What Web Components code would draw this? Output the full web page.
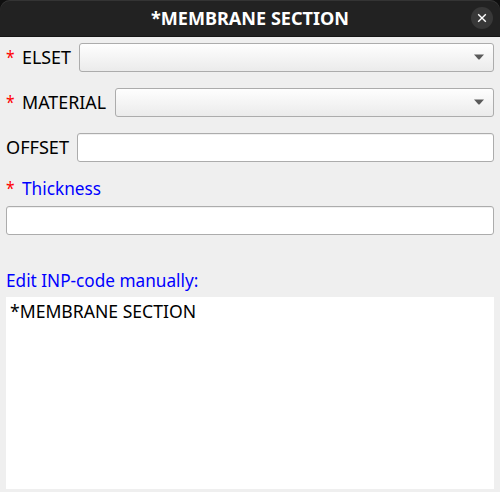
<!DOCTYPE html>
<html lang="en">
<head>
<meta charset="utf-8">
<title>*MEMBRANE SECTION</title>
<style>
html, body { margin: 0; height: 100%; overflow: hidden; background: #efefef; }
body { font: 17.3px/24px "Noto Sans", "Open Sans", sans-serif; color: #000; }
</style>
</head>
<body>
<keyword-dialog></keyword-dialog>
<script>
// Text squeezed horizontally to the advance width given in its "width" attribute.
class FitText extends HTMLElement {
  connectedCallback() {
    const root = this.attachShadow({ mode: 'open' });
    root.innerHTML = `<style>
      :host { display: block; flex: none; height: 24px; white-space: nowrap; }
      span { display: inline-block; transform-origin: 0 50%; }
    </style><span><slot></slot></span>`;
    const width = parseFloat(this.getAttribute('width'));
    this.style.width = width + 'px';
    const span = root.querySelector('span');
    span.style.transform = `scaleX(${width / span.getBoundingClientRect().width})`;
  }
}
customElements.define('fit-text', FitText);

class RequiredMark extends HTMLElement {
  constructor() {
    super();
    this.attachShadow({ mode: 'open' }).innerHTML = `<style>
      :host { display: block; flex: none; width: 16px; color: #ff0000; }
    </style><fit-text width="8.6">*</fit-text>`;
  }
}
customElements.define('required-mark', RequiredMark);

class TitleBar extends HTMLElement {
  constructor() {
    super();
    this.attachShadow({ mode: 'open' }).innerHTML = `<style>
      :host { display: block; height: 37px; flex: none; background: #0f0f0f; }
      .bar { box-sizing: border-box; height: 37px; display: grid; grid-template-columns: 30px 1fr 30px;
        background: #222; border-radius: 10px 10px 0 0; border-bottom: 1px solid #161616;
        box-shadow: inset 0 1px #343434; color: #fff; font-weight: 700; }
      .title { justify-self: center; padding-top: 7px; }
      svg { width: 22px; height: 22px; margin: 7px 0 0 1px; }
    </style>
    <div class="bar"><i></i><div class="title"><slot></slot></div>
      <svg viewBox="0 0 22 22"><circle cx="11" cy="11" r="11" fill="#383838"/>
      <path d="M7.2 7.2l7.6 7.6M14.8 7.2l-7.6 7.6" stroke="#fff" stroke-width="1.4"/></svg>
    </div>`;
  }
}
customElements.define('title-bar', TitleBar);

const FIELD_CSS = `
  :host { display: flex; box-sizing: border-box; height: 29px; flex: 1; min-width: 0;
    border: 1px solid #acacac; border-radius: 3px; background: #fff; }`;

class ComboBox extends HTMLElement {
  constructor() {
    super();
    this.attachShadow({ mode: 'open' }).innerHTML = `<style>${FIELD_CSS}
      :host { justify-content: flex-end; align-items: center; padding-right: 9px;
        background: linear-gradient(#fefefe, #ebebeb); }
      svg { width: 10px; height: 6px; margin-bottom: 1px; }
    </style><svg viewBox="0 0 10 6"><path d="M0 .5h10L5.5 5.5h-1z" fill="#5a5a5a"/></svg>`;
  }
}
customElements.define('combo-box', ComboBox);

class LineEdit extends HTMLElement {
  constructor() {
    super();
    this.attachShadow({ mode: 'open' }).innerHTML = `<style>${FIELD_CSS}
      :host { box-shadow: inset 0 1px #f0f0f0; }</style>`;
  }
}
customElements.define('line-edit', LineEdit);

class FormRow extends HTMLElement {
  constructor() {
    super();
    this.attachShadow({ mode: 'open' }).innerHTML = `<style>
      :host { display: flex; flex: none; height: 29px; align-items: center; }
    </style><slot></slot>`;
  }
}
customElements.define('form-row', FormRow);

class CodeEditor extends HTMLElement {
  constructor() {
    super();
    this.attachShadow({ mode: 'open' }).innerHTML = `<style>
      :host { display: block; flex: 1; box-sizing: border-box; background: #fff; padding: 3px 4px; }
    </style><slot></slot>`;
  }
}
customElements.define('code-editor', CodeEditor);

class KeywordDialog extends HTMLElement {
  constructor() {
    super();
    this.attachShadow({ mode: 'open' }).innerHTML = `<style>
      :host { display: flex; flex-direction: column; height: 492px; }
      main { flex: 1; display: flex; flex-direction: column; padding: 6px 6px 3px; }
      form-row { margin-bottom: 16px; }
      .heading { height: 24px; margin-bottom: 5px; color: #0000ff; }
      .thickness { margin-bottom: 34px; }
      .edit { margin-bottom: 4px; }
      combo-box, line-edit { margin-left: 8px; }
      .thickness line-edit { margin-left: 0; }
    </style>
    <title-bar><fit-text width="198">*MEMBRANE SECTION</fit-text></title-bar>
    <main>
      <form-row><required-mark></required-mark><fit-text width="49">ELSET</fit-text><combo-box></combo-box></form-row>
      <form-row><required-mark></required-mark><fit-text width="84">MATERIAL</fit-text><combo-box style="margin-left:9px"></combo-box></form-row>
      <form-row style="margin-bottom:15px"><fit-text width="63">OFFSET</fit-text><line-edit></line-edit></form-row>
      <form-row class="heading"><required-mark></required-mark><fit-text width="79">Thickness</fit-text></form-row>
      <form-row class="thickness"><line-edit></line-edit></form-row>
      <form-row class="heading edit"><fit-text width="192.3">Edit INP-code manually:</fit-text></form-row>
      <code-editor><fit-text width="186">*MEMBRANE SECTION</fit-text></code-editor>
    </main>`;
  }
}
customElements.define('keyword-dialog', KeywordDialog);
</script>
</body>
</html>
